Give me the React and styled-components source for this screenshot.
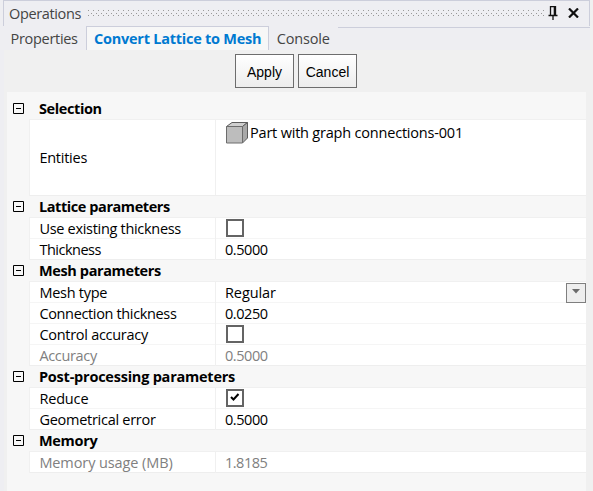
import React from "react";
import styled, { createGlobalStyle } from "styled-components";

const GlobalStyle = createGlobalStyle`
  * { box-sizing: border-box; }
  body { margin: 0; background: #f0f0f0; overflow: hidden; }
`;

const Window = styled.div`
  display: flex;
  flex-direction: column;
  width: 593px;
  height: 491px;
  background: linear-gradient(to right, #eeeef2 4px, #f0f0f0 4px);
  font: 14.5px/20px "Open Sans", "Noto Sans", sans-serif;
  color: #000;
`;

const Text = styled.span`
  letter-spacing: ${(p) => p.$track || 0}px;
  white-space: pre;
`;

const TitleBar = styled.header`
  display: flex;
  align-items: flex-start;
  width: 587px;
  height: 26px;
  flex: none;
  margin-left: 3px;
  padding: 3px 8px 0 5px;
  border: 1px solid #cccedb;
  border-bottom: 0;
  background: #eeeef2;
  color: #444;
`;

const TitleText = styled(Text)`
  width: 73px;
  flex: none;
`;

const Grip = styled.svg`
  flex: none;
  margin: 6px 4px 0 6px;
`;

const TitleIcon = styled.svg`
  flex: none;
  margin: ${(p) => p.$margin};
`;

const TabBar = styled.nav`
  display: flex;
  flex: none;
  height: 24px;
  width: 590px;
  background: #eeeef2;
`;

const Tab = styled.div`
  width: ${(p) => p.$width}px;
  padding: ${(p) => (p.$active ? "3px 0 0 7px" : "3px 0 0 " + p.$indent + "px")};
  border: ${(p) => (p.$active ? "1px solid #cccedb" : "0 solid")};
  border-bottom: 0;
  background: ${(p) => (p.$active ? "#f7f7f7" : "transparent")};
  color: ${(p) => (p.$active ? "#007ad1" : "#444")};
  font-weight: ${(p) => (p.$active ? 700 : 400)};
  line-height: ${(p) => (p.$active ? 18 : 20)}px;
`;

const TabRule = styled.div`
  flex: 1;
  height: 1px;
  margin-top: 1px;
  background: #cccedb;
`;

const Actions = styled.div`
  display: flex;
  flex: none;
  gap: 4px;
  height: 42px;
  padding: 4px 0 0 235px;
`;

const Button = styled.button`
  width: 59px;
  height: 34px;
  padding: 1px 0 0;
  border: 1px solid #6d6d6d;
  border-radius: 0;
  background: linear-gradient(#ffffff, #ededed);
  color: #000;
  font: 14px/20px "Liberation Sans", Arial, sans-serif;
`;

const Panel = styled.main`
  flex: 1;
  width: 579px;
  margin-left: 7px;
  padding-top: 6px;
  background: #f7f7f7;
`;

const SectionHead = styled.h2`
  display: flex;
  height: 21px;
  margin: 0;
  padding-left: 6px;
  font-size: 14.5px;
  line-height: 22px;
`;

const Toggle = styled.svg`
  flex: none;
  margin: 5px 15px 0 0;
`;

const Rows = styled.div`
  margin-left: 22px;
  border-top: 1px solid #f0f0f0;
  border-left: 1px solid #f0f0f0;
  background: #fff;
`;

const Row = styled.div`
  display: grid;
  grid-template-columns: 185px 1fr;
  height: ${(p) => p.$height || 21}px;
  border-bottom: 1px solid #f5f5f5;
  color: ${(p) => (p.$muted ? "#808080" : "#000")};
  &:last-child { border-bottom-color: #eeeeee; }
`;

const Label = styled.div`
  display: flex;
  align-items: center;
  padding: 1px 0 0 9.4px;
`;

const Value = styled.div`
  display: flex;
  align-items: ${(p) => (p.$top ? "flex-start" : "center")};
  padding-left: ${(p) => (p.$top ? 10 : 9)}px;
  padding-top: ${(p) => (p.$top ? 2 : 1)}px;
  border-left: 1px solid #f0f0f0;
`;

const CheckFrame = styled.span`
  display: grid;
  place-items: center;
  width: 18px;
  height: 18px;
  margin: -2px 0 0 1px;
  border: 2px solid #646464;
  background: #fff;
`;

const DropButton = styled.span`
  display: grid;
  place-items: center;
  width: 20px;
  height: 20px;
  margin: -1px 0 0 auto;
  padding-bottom: 2px;
  border: 1px solid #7f7f7f;
  background: #eee;
`;

const EntityName = styled(Text)`
  margin: 1px 0 0 2px;
`;

const Checkbox = ({ checked }) => (
  <CheckFrame>
    {checked && (
      <svg width="10" height="10" viewBox="0 0 10 10">
        <path d="M1 4 3.5 6.5 8.5 1" fill="none" stroke="#000" strokeWidth="2" />
      </svg>
    )}
  </CheckFrame>
);

const Cube = () => (
  <svg width="22" height="22" viewBox="0 0 22 22">
    <path d="M.5 4.5 6 .5h15.5l-5 4z" fill="#cfcfcf" stroke="#5c5c5c" />
    <path d="M16.5 4.5l5-4v15.5l-5 5z" fill="#a9a9a9" stroke="#5c5c5c" />
    <path d="M.5 4.5h16v16.5h-16z" fill="#bdbdbd" stroke="#6c6c6c" />
  </svg>
);

const sections = [
  { title: "Selection", track: -0.4, rows: [
    { label: "Entities", track: -0.25, entity: "Part with graph connections-001", height: 76 },
  ] },
  { title: "Lattice parameters", track: -0.43, rows: [
    { label: "Use existing thickness", track: -0.3, check: "off" },
    { label: "Thickness", track: -0.5, value: "0.5000", vt: -0.45 },
  ] },
  { title: "Mesh parameters", track: -0.38, rows: [
    { label: "Mesh type", track: -0.26, value: "Regular", vt: -0.1, dropdown: true },
    { label: "Connection thickness", track: -0.35, value: "0.0250", vt: -0.45 },
    { label: "Control accuracy", track: -0.28, check: "off" },
    { label: "Accuracy", track: -0.34, value: "0.5000", vt: -0.45, muted: true },
  ] },
  { title: "Post-processing parameters", track: -0.23, rows: [
    { label: "Reduce", track: -0.16, check: "on" },
    { label: "Geometrical error", track: -0.27, value: "0.5000", vt: -0.45 },
  ] },
  { title: "Memory", track: -0.33, rows: [
    { label: "Memory usage (MB)", track: -0.1, value: "1.8185", vt: -0.5, muted: true },
  ] },
];

const PropertyRow = ({ row }) => (
  <Row $height={row.height} $muted={row.muted}>
    <Label><Text $track={row.track}>{row.label}</Text></Label>
    <Value $top={!!row.entity}>
      {row.entity && <><Cube /><EntityName $track={-0.2}>{row.entity}</EntityName></>}
      {row.check && <Checkbox checked={row.check === "on"} />}
      {row.value && <Text $track={row.vt}>{row.value}</Text>}
      {row.dropdown && (
        <DropButton>
          <svg width="8" height="5" viewBox="0 0 8 5">
            <path d="M0 0h8L4 4.5z" fill="#6b6b6b" />
          </svg>
        </DropButton>
      )}
    </Value>
  </Row>
);

export default function App() {
  return (
    <Window>
      <GlobalStyle />
      <TitleBar>
        <TitleText $track={-0.36}>Operations</TitleText>
        <Grip width="456" height="6">
          <defs>
            <pattern id="grip" width="5" height="5" patternUnits="userSpaceOnUse">
              <path d="M0 0h1v1H0zM3 3h1v1H3z" fill="#999" />
            </pattern>
          </defs>
          <rect width="456" height="6" fill="url(#grip)" />
        </Grip>
        <TitleIcon $margin="2px 0 0 0" width="10" height="14" viewBox="0 0 10 14">
          <path d="M2.5 9V.5h5V9M.5 9.5h9M5 9.5V14" fill="none" stroke="#111" strokeWidth="1.3" />
          <path d="M5.7 1h2.3v8H5.7z" fill="#111" />
        </TitleIcon>
        <TitleIcon $margin="4px 0 0 10px" width="11" height="10" viewBox="0 0 11 10">
          <path d="M1 .5l9 9M10 .5l-9 9" stroke="#111" strokeWidth="2.2" />
        </TitleIcon>
      </TitleBar>
      <TabBar>
        <Tab $width={86} $indent={10.6}><Text $track={-0.31}>Properties</Text></Tab>
        <Tab $width={183} $active><Text $track={-0.25}>Convert Lattice to Mesh</Text></Tab>
        <Tab $width={69} $indent={7.8}><Text $track={-0.17}>Console</Text></Tab>
        <TabRule />
      </TabBar>
      <Actions>
        <Button>Apply</Button>
        <Button>Cancel</Button>
      </Actions>
      <Panel>
        {sections.map((s) => (
          <section key={s.title}>
            <SectionHead>
              <Toggle width="11" height="11" viewBox="0 0 11 11">
                <path d="M.5.5h10v10H.5zM3 5.5h5" fill="none" stroke="#000" />
              </Toggle>
              <Text $track={s.track}>{s.title}</Text>
            </SectionHead>
            <Rows>{s.rows.map((r) => <PropertyRow key={r.label} row={r} />)}</Rows>
          </section>
        ))}
      </Panel>
    </Window>
  );
}
